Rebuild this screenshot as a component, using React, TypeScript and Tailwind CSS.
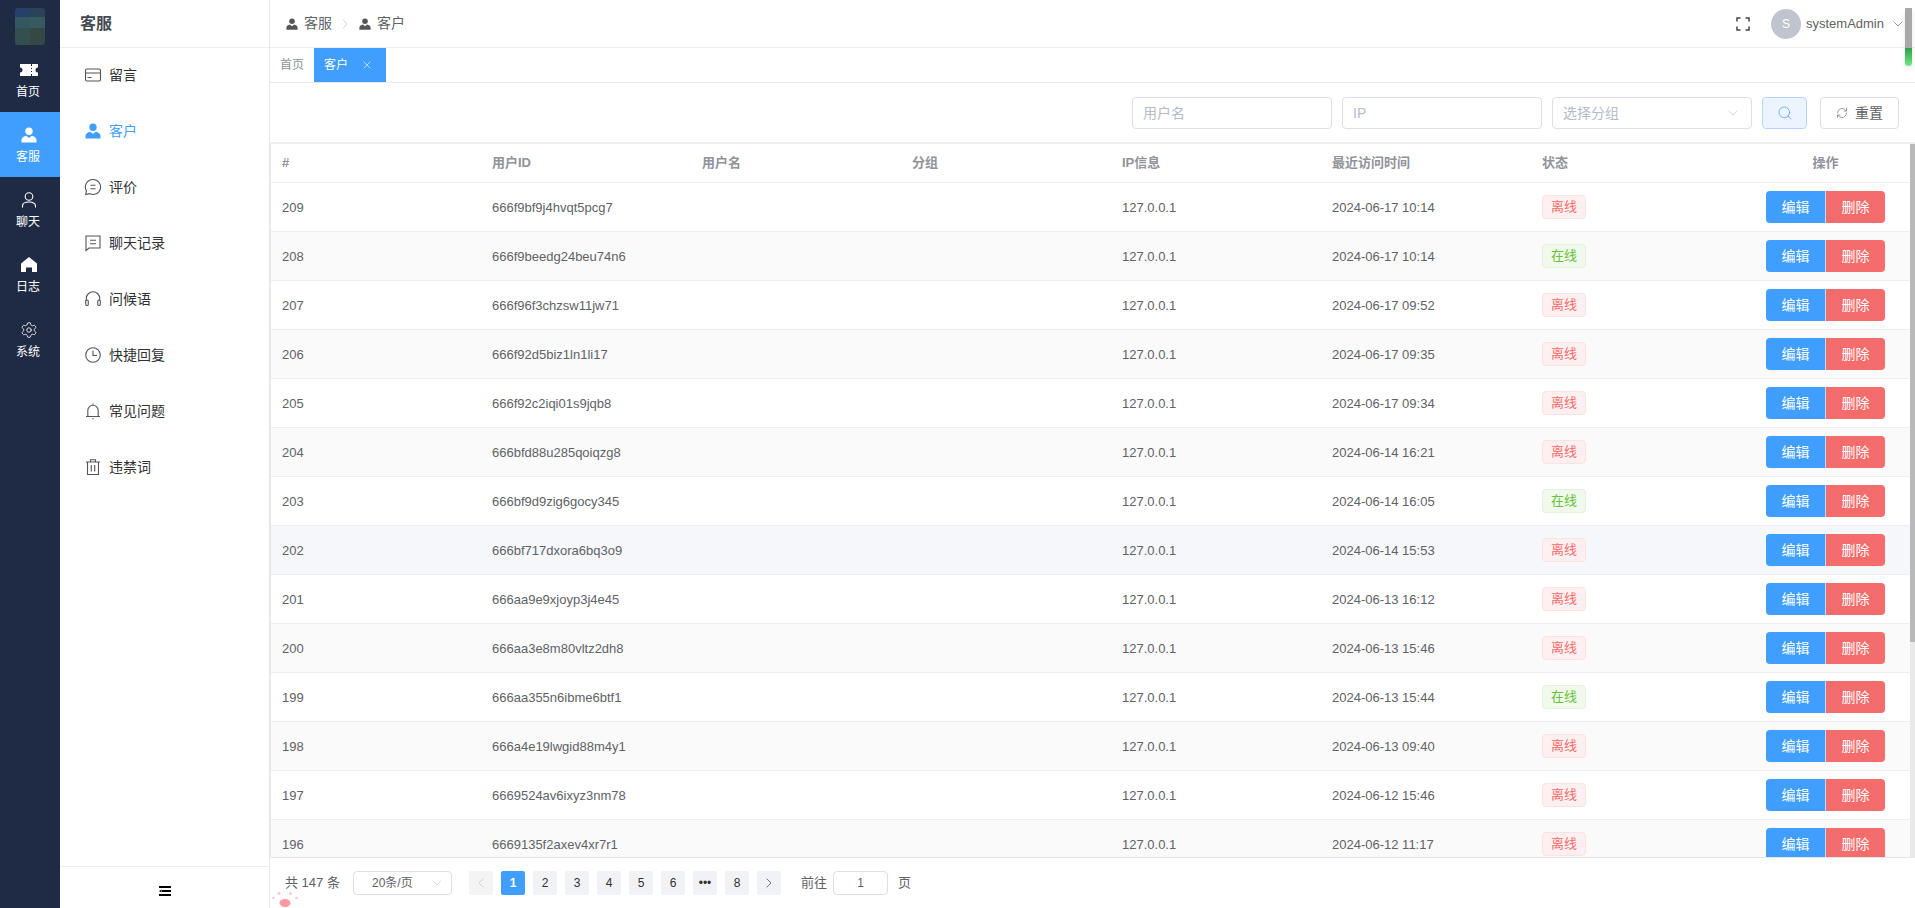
import { ChevronDown, ChevronLeft, ChevronRight, RefreshCw, Search, Settings, X } from "lucide-react";

const FONT = "font-['Liberation_Sans','Noto_Sans_CJK_SC',sans-serif]";

const rows = [
  ["209", "666f9bf9j4hvqt5pcg7", "2024-06-17 10:14", "离线"],
  ["208", "666f9beedg24beu74n6", "2024-06-17 10:14", "在线"],
  ["207", "666f96f3chzsw11jw71", "2024-06-17 09:52", "离线"],
  ["206", "666f92d5biz1ln1li17", "2024-06-17 09:35", "离线"],
  ["205", "666f92c2iqi01s9jqb8", "2024-06-17 09:34", "离线"],
  ["204", "666bfd88u285qoiqzg8", "2024-06-14 16:21", "离线"],
  ["203", "666bf9d9zig6gocy345", "2024-06-14 16:05", "在线"],
  ["202", "666bf717dxora6bq3o9", "2024-06-14 15:53", "离线"],
  ["201", "666aa9e9xjoyp3j4e45", "2024-06-13 16:12", "离线"],
  ["200", "666aa3e8m80vltz2dh8", "2024-06-13 15:46", "离线"],
  ["199", "666aa355n6ibme6btf1", "2024-06-13 15:44", "在线"],
  ["198", "666a4e19lwgid88m4y1", "2024-06-13 09:40", "离线"],
  ["197", "6669524av6ixyz3nm78", "2024-06-12 15:46", "离线"],
  ["196", "6669135f2axev4xr7r1", "2024-06-12 11:17", "离线"],
];

function TicketIcon() {
  return (
    <svg width="18" height="12" viewBox="0 0 18 12" fill="#fff">
      <path d="M0 0h11v2h1V0h6v3.5a2.5 2.5 0 0 0 0 5V12h-6v-2h-1v2H0V8.500a2.500 2.500 0 0 0 0-5zM11 4v1h1V4zm0 3v1h1V7z" />
    </svg>
  );
}

function UserFill({ size = 16, color = "#fff" }: { size?: number; color?: string }) {
  return (
    <svg width={size} height={size} viewBox="0 0 16 16" fill={color}>
      <circle cx="8" cy="4.200" r="3.700" />
      <path d="M0.500 15.500V13c0-2.300 2.300-3.800 4.700-4.300L8 11l2.800-2.300c2.400.5 4.700 2 4.700 4.300v2.500z" />
    </svg>
  );
}

function UserLine() {
  return (
    <svg width="16" height="16" viewBox="0 0 16 16" fill="none" stroke="#fff" strokeWidth="1.100">
      <circle cx="8" cy="4.500" r="3.800" />
      <path d="M1.500 15.500v-1.500c0-2.600 2.500-4 6.500-4s6.500 1.400 6.500 4v1.500" />
    </svg>
  );
}

function HomeIcon() {
  return (
    <svg width="16" height="15" viewBox="0 0 16 15" fill="#fff">
      <path d="M8 0l8 6.500V15h-5v-4.500H5V15H0V6.500z" />
    </svg>
  );
}

function MenuIcon({ name, color = "#555" }: { name: string; color?: string }) {
  const base = { width: 18, height: 18, viewBox: "0 0 18 18", fill: "none", stroke: color, strokeWidth: 1.100 };
  if (name === "card")
    return (
      <svg {...base}>
        <rect x="1.500" y="3" width="15" height="12" rx="1.500" />
        <path d="M1.500 7h15M3.500 11.500h4" />
      </svg>
    );
  if (name === "user") return <UserFill size={16} color={color} />;
  if (name === "chat")
    return (
      <svg {...base}>
        <path d="M9 1.500a7.500 7.500 0 1 1-3.500 14.100L1.700 16.500l.8-3.600A7.500 7.500 0 0 1 9 1.500z" />
        <path d="M6.500 7.300h5M6.500 10.700h5" />
      </svg>
    );
  if (name === "square")
    return (
      <svg {...base}>
        <path d="M2 2h14v12H5l-3 2.500z" />
        <path d="M6 6.300h6M6 9.800h6" />
      </svg>
    );
  if (name === "headset")
    return (
      <svg {...base}>
        <path d="M2.300 11V8.500a6.700 6.700 0 0 1 13.400 0V11" />
        <rect x="1.700" y="10" width="2.600" height="5.500" rx="1.300" />
        <rect x="13.700" y="10" width="2.600" height="5.500" rx="1.300" />
      </svg>
    );
  if (name === "clock")
    return (
      <svg {...base}>
        <circle cx="9" cy="9" r="7.300" />
        <path d="M9 4.500V9.500h4" />
      </svg>
    );
  if (name === "bell")
    return (
      <svg {...base}>
        <path d="M2 14.500h14M3.800 14.500V8.500a5.200 5.200 0 0 1 10.400 0v6M9 1.500v1.800M8.300 16.800h1.400" />
      </svg>
    );
  return (
    <svg {...base}>
      <path d="M2 4h14M3.500 4v12.500h11V4M6.500 4V1.700h5V4M7.300 7v6.500M10.700 7v6.500" />
    </svg>
  );
}

function FullscreenIcon() {
  return (
    <svg width="14" height="14" viewBox="0 0 14 14" fill="none" stroke="#444" strokeWidth="1.500">
      <path d="M1 4.500V1h3.500M9.500 1H13v3.500M13 9.500V13H9.500M4.500 13H1V9.500" />
    </svg>
  );
}

function CollapseIcon() {
  return (
    <svg width="12" height="10" viewBox="0 0 12 10" fill="#000">
      <path d="M0 0h12v2H0zM3 4h9v2H3zM0 8h12v2H0zM0 5l2.500-1.500v3z" />
    </svg>
  );
}

function Paw() {
  return (
    <svg width="28" height="17" viewBox="0 0 28 17" fill="#fb9ba1">
      <ellipse cx="14" cy="12" rx="5.500" ry="4" />
      <circle cx="2.500" cy="7" r="1.300" fill="#fccbce" />
      <circle cx="8" cy="2.500" r="1.500" fill="#fccbce" />
      <circle cx="19.500" cy="2.500" r="1.500" fill="#fccbce" />
      <circle cx="25.500" cy="7" r="1.300" fill="#fccbce" />
    </svg>
  );
}

function Logo() {
  return (
    <svg width="30" height="37" viewBox="0 0 30 37" className="blur-[0.6px] rounded-[3px]">
      <rect width="15" height="9" fill="#26406a" />
      <rect x="15" width="15" height="9" fill="#2c4256" />
      <rect y="9" width="15" height="11" fill="#34575f" />
      <rect x="15" y="9" width="15" height="11" fill="#365a60" />
      <rect y="20" width="15" height="17" fill="#33504f" />
      <rect x="15" y="20" width="15" height="17" fill="#364844" />
    </svg>
  );
}

function RailItem({ label, active, children }: { label: string; active?: boolean; children: React.ReactNode }) {
  return (
    <div className={`h-[65px] flex flex-col items-center pt-[14px] pr-[4px] ${active ? "bg-[#409eff]" : ""}`}>
      <div className="h-[17px] flex items-center justify-center pl-[1px]">{children}</div>
      <div className="mt-[4px] text-[12px] leading-[20px] text-white">{label}</div>
    </div>
  );
}

function MenuItem({ icon, label, active }: { icon: string; label: string; active?: boolean }) {
  return (
    <div className="h-[56px] flex items-center pl-[24px] pb-[2px]">
      <div className="w-[18px] flex justify-center">
        <MenuIcon name={icon} color={active ? "#409eff" : "#555"} />
      </div>
      <span className={`ml-[7px] text-[14px] ${active ? "text-[#409eff]" : "text-[#303133]"}`}>{label}</span>
    </div>
  );
}

function Field({ placeholder, select }: { placeholder: string; select?: boolean }) {
  return (
    <div className="w-[200px] h-[32px] flex items-center justify-between px-[10px] bg-white border border-[#dcdfe6] rounded-[4px]">
      <span className="text-[14px] text-[#b4bccc]">{placeholder}</span>
      {select && <ChevronDown size={16} strokeWidth={1} className="text-[#c0c4cc]" />}
    </div>
  );
}

function PageBtn({ children, active, muted }: { children: React.ReactNode; active?: boolean; muted?: boolean }) {
  return (
    <div
      className={`w-[24px] h-[24px] flex items-center justify-center rounded-[2px] text-[12px] ${
        active ? "bg-[#409eff] text-white font-bold" : muted ? "bg-[#f4f4f5] text-[#c0c4cc]" : "bg-[#f0f2f5] text-[#303133]"
      }`}
    >
      {children}
    </div>
  );
}

export default function App() {
  return (
    <div className={`relative flex w-full h-screen overflow-hidden bg-white ${FONT}`}>
      {/* main nav */}
      <div className="w-[60px] shrink-0 bg-[#1f2a44]">
        <div className="h-[47px] pt-[8px] flex justify-center">
          <Logo />
        </div>
        <RailItem label="首页">
          <TicketIcon />
        </RailItem>
        <RailItem label="客服" active>
          <UserFill />
        </RailItem>
        <RailItem label="聊天">
          <UserLine />
        </RailItem>
        <RailItem label="日志">
          <HomeIcon />
        </RailItem>
        <RailItem label="系统">
          <Settings size={18} strokeWidth={1.100} color="#fff" />
        </RailItem>
      </div>

      {/* sub menu */}
      <div className="w-[210px] shrink-0 flex flex-col border-r border-[#e6e6e6]">
        <div className="h-[48px] shrink-0 flex items-center pl-[20px] border-b border-[#eeeeee] text-[16px] font-bold text-[#444a52]">
          客服
        </div>
        <div className="flex-1">
          <MenuItem icon="card" label="留言" />
          <MenuItem icon="user" label="客户" active />
          <MenuItem icon="chat" label="评价" />
          <MenuItem icon="square" label="聊天记录" />
          <MenuItem icon="headset" label="问候语" />
          <MenuItem icon="clock" label="快捷回复" />
          <MenuItem icon="bell" label="常见问题" />
          <MenuItem icon="trash" label="违禁词" />
        </div>
        <div className="h-[42px] shrink-0 flex items-center justify-center pt-[6px] border-t border-[#eeeeee]">
          <CollapseIcon />
        </div>
      </div>

      <div className="flex-1 min-w-0 flex flex-col">
        {/* top bar */}
        <div className="h-[48px] shrink-0 flex items-center pl-[16px] pr-[9px] border-b border-[#eeeeee] text-[14px] text-[#606266]">
          <UserFill size={12} color="#555" />
          <span className="ml-[6px]">客服</span>
          <ChevronRight size={16} strokeWidth={1} className="ml-[5px] mr-[6px] text-[#c0c4cc]" />
          <UserFill size={12} color="#555" />
          <span className="ml-[6px]">客户</span>
          <div className="ml-auto flex items-center">
            <FullscreenIcon />
            <div className="ml-[21px] w-[30px] h-[30px] rounded-full bg-[#c0c4cc] flex items-center justify-center text-[12px] text-white">
              S
            </div>
            <span className="ml-[5px] text-[13px] text-[#606266]">systemAdmin</span>
            <ChevronDown size={16} strokeWidth={1} className="ml-[6px] text-[#606266]" />
          </div>
        </div>

        {/* tabs */}
        <div className="h-[35px] shrink-0 flex items-stretch border-b border-[#e6e6e6] pl-[10px] text-[12px]">
          <div className="w-[34px] flex items-center text-[#909399]">首页</div>
          <div className="w-[72px] flex items-center pl-[10px] bg-[#409eff] text-white">
            客户
            <X size={12} strokeWidth={1.200} className="ml-[13px]" />
          </div>
        </div>

        {/* filters */}
        <div className="h-[61px] shrink-0 flex items-center justify-end gap-[10px] pr-[16px] pt-[1px] border-b-2 border-[#eeeeee]">
          <Field placeholder="用户名" />
          <Field placeholder="IP" />
          <Field placeholder="选择分组" select />
          <div className="w-[45px] h-[32px] flex items-center justify-center bg-[#ecf5ff] border border-[#b3d8ff] rounded-[4px]">
            <Search size={16} strokeWidth={1.100} className="text-[#409eff]" />
          </div>
          <div className="ml-[3px] w-[79px] h-[32px] flex items-center justify-center gap-[7px] border border-[#dcdfe6] rounded-[4px] text-[14px] text-[#606266]">
            <RefreshCw size={12} strokeWidth={1.200} />
            重置
          </div>
        </div>

        {/* table */}
        <div className="flex-1 min-h-0 flex border-l border-[#e8e8e8]">
          <div className="flex-1 min-w-0 overflow-hidden">
            <div className="h-[39px] flex items-center border-b border-[#ebeef5] text-[13px] font-bold text-[#909399]">
              <div className="w-[210px] pl-[11px]">#</div>
              <div className="w-[210px] pl-[11px]">用户ID</div>
              <div className="w-[210px] pl-[11px]">用户名</div>
              <div className="w-[210px] pl-[11px]">分组</div>
              <div className="w-[210px] pl-[11px]">IP信息</div>
              <div className="w-[210px] pl-[11px]">最近访问时间</div>
              <div className="w-[210px] pl-[11px]">状态</div>
              <div className="flex-1 text-center">操作</div>
            </div>
            {rows.map(([id, uid, time, status], i) => (
              <div
                key={id}
                className={`h-[49px] flex items-center border-b border-[#ebeef5] text-[13px] text-[#606266] ${
                  id === "202" ? "bg-[#f5f7fa]" : i % 2 === 1 ? "bg-[#fafafa]" : ""
                }`}
              >
                <div className="w-[210px] pl-[11px] pt-[1px]">{id}</div>
                <div className="w-[210px] pl-[11px] pt-[1px]">{uid}</div>
                <div className="w-[210px]" />
                <div className="w-[210px]" />
                <div className="w-[210px] pl-[11px] pt-[1px]">127.0.0.1</div>
                <div className="w-[210px] pl-[11px] pt-[1px]">{time}</div>
                <div className="w-[210px] pl-[11px]">
                  <span
                    className={`inline-flex w-[44px] h-[24px] items-center justify-center rounded-[4px] border ${
                      status === "在线"
                        ? "bg-[#f0f9eb] border-[#e1f3d8] text-[#67c23a]"
                        : "bg-[#fef0f0] border-[#fde2e2] text-[#f56c6c]"
                    }`}
                  >
                    {status}
                  </span>
                </div>
                <div className="flex-1 flex justify-center">
                  <div className="flex w-[119px] h-[32px] rounded-[4px] overflow-hidden text-[14px] text-white">
                    <div className="w-[59px] flex items-center justify-center bg-[#409eff]">编辑</div>
                    <div className="flex-1 flex items-center justify-center bg-[#f56c6c] border-l border-[#c6d9f0]">删除</div>
                  </div>
                </div>
              </div>
            ))}
          </div>
          <div className="w-[5px] shrink-0 bg-[#e9e9e9]">
            <div className="h-[498px] bg-[#b9b9b9]" />
          </div>
        </div>

        {/* pagination */}
        <div className="h-[51px] shrink-0 flex items-center pl-[15px] border-t border-[#e6e6e6] text-[13px] text-[#606266]">
          <span className="w-[68px]">共 147 条</span>
          <div className="w-[99px] h-[24px] flex items-center justify-between pl-[18px] pr-[6px] border border-[#dcdfe6] rounded-[4px] text-[12px]">
            20条/页
            <ChevronDown size={16} strokeWidth={1} className="text-[#c0c4cc]" />
          </div>
          <div className="ml-[17px] flex gap-[8px]">
            <PageBtn muted>
              <ChevronLeft size={16} strokeWidth={1} />
            </PageBtn>
            <PageBtn active>1</PageBtn>
            <PageBtn>2</PageBtn>
            <PageBtn>3</PageBtn>
            <PageBtn>4</PageBtn>
            <PageBtn>5</PageBtn>
            <PageBtn>6</PageBtn>
            <PageBtn>•••</PageBtn>
            <PageBtn>8</PageBtn>
            <PageBtn>
              <ChevronRight size={16} strokeWidth={1} />
            </PageBtn>
          </div>
          <span className="ml-[20px]">前往</span>
          <div className="ml-[6px] w-[55px] h-[24px] flex items-center justify-center border border-[#dcdfe6] rounded-[4px] text-[12px]">
            1
          </div>
          <span className="ml-[10px]">页</span>
        </div>
      </div>

      {/* floating page decorations */}
      <div className="absolute left-[271px] bottom-0">
        <Paw />
      </div>
      <div className="absolute right-[3px] top-[8px] w-[7px] h-[58px] rounded-b-[4px] overflow-hidden shadow-md">
        <div className="h-[40px] bg-[#a9a9a9]" />
        <div className="h-[18px] bg-gradient-to-b from-[#2f9e4f] to-[#6fea85]" />
      </div>
    </div>
  );
}
